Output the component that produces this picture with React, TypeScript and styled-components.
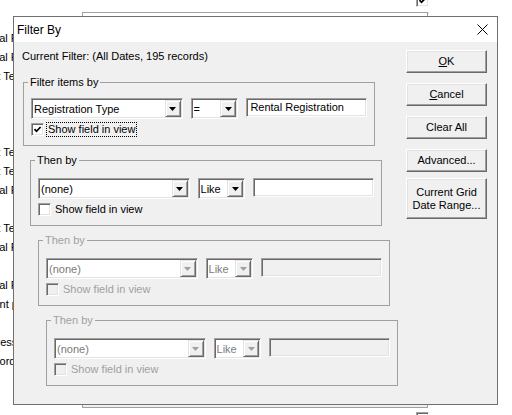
import * as React from "react";
import styled, { createGlobalStyle } from "styled-components";

const GlobalStyle = createGlobalStyle`
  html, body {
    margin: 0;
    padding: 0;
    background: #fff;
  }
  body {
    font-family: "Liberation Sans", Arial, sans-serif;
    font-size: 11px;
    color: #000;
  }
`;

const Desktop = styled.div`
  position: relative;
  width: 512px;
  height: 415px;
  overflow: hidden;
  background: #fff;
`;

// grid of the page underneath the dialogs
const PageGrid = styled.div`
  position: absolute;
  left: 0;
  top: -9px;
  display: grid;
  grid-template-columns: 13px 403px 13px;
  grid-auto-rows: 19px;
  align-items: center;
`;

const PageCell = styled.div`
  overflow: hidden;
  height: 19px;
`;

const PageText = styled.div<{ $indent: number }>`
  margin-left: ${(p) => p.$indent}px;
  white-space: nowrap;
  line-height: 19px;
`;

const BackWindow = styled.div`
  position: absolute;
  left: 82px;
  top: 12px;
  width: 346px;
  height: 396px;
  box-sizing: border-box;
  border: 1px solid #a0a0a0;
  background: #fff;
  display: flex;
  flex-direction: column;
  justify-content: flex-end;
`;

const BackStatus = styled.div`
  height: 3px;
  background: #f0f0f0;
`;

const Dialog = styled.div`
  position: absolute;
  left: 13px;
  top: 16px;
  width: 485px;
  height: 389px;
  box-sizing: border-box;
  border: 1px solid #707070;
  background: #f0f0f0;
  display: flex;
  flex-direction: column;
`;

const TitleBar = styled.div`
  height: 25px;
  flex: none;
  background: #fff;
  display: flex;
  align-items: center;
  justify-content: space-between;
  padding: 0 9px 0 3px;
  font-size: 12px;
`;

const CloseGlyph = styled.svg`
  width: 11px;
  height: 11px;
`;

const Body = styled.div`
  flex: 1;
  display: flex;
  gap: 8px;
  padding: 8px 0 0 8px;
`;

const FilterColumn = styled.div`
  width: 376px;
  display: flex;
  flex-direction: column;
`;

const CurrentFilter = styled.div`
  line-height: 13px;
  margin-bottom: 13px;
`;

const Group = styled.fieldset<{ $indent: number; $top: number }>`
  width: 352px;
  box-sizing: border-box;
  margin: 0 0 8px ${(p) => p.$indent}px;
  padding: ${(p) => p.$top}px 7px 8px 7px;
  border: 1px solid #a0a0a0;
  min-width: 0;
`;

const Legend = styled.legend<{ $disabled: boolean }>`
  padding: 0 2px;
  margin-left: -3px;
  line-height: 13px;
  color: ${(p) => (p.$disabled ? "#a0a0a0" : "#000")};
`;

const FieldRow = styled.div`
  display: flex;
  gap: 8px;
  align-items: flex-start;
`;

const Combo = styled.div<{ $width: number; $disabled: boolean }>`
  width: ${(p) => p.$width}px;
  height: 21px;
  box-sizing: border-box;
  border: 1px solid;
  border-color: #a0a0a0 #fff #fff #a0a0a0;
  box-shadow: inset 1px 1px #696969, inset -1px -1px #e3e3e3;
  background: #fff;
  padding: 2px 1px 2px 2px;
  display: flex;
  align-items: center;
  color: ${(p) => (p.$disabled ? "#7a7a7a" : "#000")};
`;

const ComboText = styled.span`
  flex: 1;
  white-space: nowrap;
  overflow: hidden;
`;

const DropButton = styled.span`
  width: 16px;
  height: 17px;
  flex: none;
  box-sizing: border-box;
  border: 1px solid;
  border-color: #e3e3e3 #696969 #696969 #e3e3e3;
  box-shadow: inset 1px 1px #fff, inset -1px -1px #a0a0a0;
  background: #f0f0f0;
  display: flex;
  align-items: center;
  justify-content: center;
`;

const TextBox = styled.div<{ $disabled: boolean }>`
  width: 121px;
  height: 19px;
  box-sizing: border-box;
  border: 1px solid;
  border-color: #a0a0a0 #fff #fff #a0a0a0;
  box-shadow: inset 1px 1px #696969, inset -1px -1px #e3e3e3;
  background: ${(p) => (p.$disabled ? "#f0f0f0" : "#fff")};
  padding: 0 3px;
  line-height: 17px;
  white-space: nowrap;
  overflow: hidden;
`;

const CheckRow = styled.div`
  display: flex;
  align-items: center;
  height: 15px;
  margin-top: 3px;
`;

const Box = styled.span<{ $disabled?: boolean }>`
  width: 13px;
  height: 13px;
  box-sizing: border-box;
  flex: none;
  border: 1px solid;
  border-color: #a0a0a0 #fff #fff #a0a0a0;
  box-shadow: inset 1px 1px #696969, inset -1px -1px #e3e3e3;
  background: ${(p) => (p.$disabled ? "#f0f0f0" : "#fff")};
  display: flex;
  align-items: center;
  justify-content: center;
`;

const CheckLabel = styled.span<{ $focused: boolean; $disabled: boolean }>`
  margin-left: 2px;
  padding: 0 1px;
  line-height: 13px;
  white-space: nowrap;
  border: 1px dotted ${(p) => (p.$focused ? "#000" : "transparent")};
  color: ${(p) => (p.$disabled ? "#a0a0a0" : "#000")};
`;

const ButtonColumn = styled.div`
  display: flex;
  flex-direction: column;
  gap: 10px;
`;

const Button = styled.button<{ $tall?: boolean }>`
  width: 81px;
  height: ${(p) => (p.$tall ? 41 : 23)}px;
  box-sizing: border-box;
  margin: ${(p) => (p.$tall ? "-4px 0 0" : "0")};
  padding: 0;
  font: inherit;
  line-height: 13px;
  color: #000;
  background: #f0f0f0;
  border: 1px solid;
  border-color: #fff #696969 #696969 #fff;
  box-shadow: inset -1px -1px #a0a0a0, inset 1px 1px #e3e3e3;
`;

function Arrow({ disabled }: { disabled: boolean }) {
  return (
    <svg width="7" height="4" viewBox="0 0 7 4">
      <polygon points="0,0 7,0 3.5,4" fill={disabled ? "#a0a0a0" : "#000"} />
    </svg>
  );
}

function Checkbox({ checked, disabled }: { checked: boolean; disabled?: boolean }) {
  return (
    <Box $disabled={disabled}>
      {checked && (
        <svg width="9" height="9" viewBox="0 0 9 9">
          <polyline
            points="1.5,4.2 3.5,6.3 7.6,2"
            fill="none"
            stroke="#000"
            strokeWidth="1.8"
          />
        </svg>
      )}
    </Box>
  );
}

interface FilterGroup {
  title: string;
  field: string;
  op: string;
  value: string;
  checked: boolean;
  focused: boolean;
  disabled: boolean;
  indent: number;
  top: number;
}

const groups: FilterGroup[] = [
  {
    title: "Filter items by",
    field: "Registration Type",
    op: "=",
    value: "Rental Registration",
    checked: true,
    focused: true,
    disabled: false,
    indent: 1,
    top: 9,
  },
  { title: "Then by", field: "(none)", op: "Like", value: "", checked: false, focused: false, disabled: false, indent: 8, top: 11 },
  { title: "Then by", field: "(none)", op: "Like", value: "", checked: false, focused: false, disabled: true, indent: 16, top: 11 },
  { title: "Then by", field: "(none)", op: "Like", value: "", checked: false, focused: false, disabled: true, indent: 24, top: 11 },
];

const pageRows: { [row: number]: [string, number] } = {
  2: ["Rental Registration", -24],
  3: ["Rental Registration", -24],
  4: ["Short Term Rental", -26],
  8: ["Short Term Rental", -26],
  9: ["Short Term Rental", -26],
  10: ["Rental Registration", -24],
  12: ["Short Term Rental", -26],
  13: ["Rental Registration", -24],
  15: ["Rental Registration", -24],
  16: ["Agent permit", -20],
  18: ["Address", -23],
  19: ["Record", -20],
};

export default function App() {
  const rows = Array.from({ length: 23 }, (_, i) => i);
  return (
    <>
      <GlobalStyle />
      <Desktop>
        <PageGrid>
          {rows.map((i) => (
            <React.Fragment key={i}>
              <PageCell>
                {pageRows[i] && <PageText $indent={pageRows[i][1]}>{pageRows[i][0]}</PageText>}
              </PageCell>
              <div />
              <Checkbox checked={i === 0} />
            </React.Fragment>
          ))}
        </PageGrid>

        <BackWindow>
          <BackStatus />
        </BackWindow>

        <Dialog>
          <TitleBar>
            <span>Filter By</span>
            <CloseGlyph viewBox="0 0 11 11">
              <path d="M0.5 0.5 L10.5 10.5 M10.5 0.5 L0.5 10.5" stroke="#000" strokeWidth="1" />
            </CloseGlyph>
          </TitleBar>
          <Body>
            <FilterColumn>
              <CurrentFilter>Current Filter: (All Dates, 195 records)</CurrentFilter>
              {groups.map((g, i) => (
                <Group key={i} $indent={g.indent} $top={g.top}>
                  <Legend $disabled={g.disabled}>{g.title}</Legend>
                  <FieldRow>
                    <Combo $width={152} $disabled={g.disabled}>
                      <ComboText>{g.field}</ComboText>
                      <DropButton>
                        <Arrow disabled={g.disabled} />
                      </DropButton>
                    </Combo>
                    <Combo $width={48} $disabled={g.disabled}>
                      <ComboText>{g.op}</ComboText>
                      <DropButton>
                        <Arrow disabled={g.disabled} />
                      </DropButton>
                    </Combo>
                    <TextBox $disabled={g.disabled}>{g.value}</TextBox>
                  </FieldRow>
                  <CheckRow>
                    <Checkbox checked={g.checked} disabled={g.disabled} />
                    <CheckLabel $focused={g.focused} $disabled={g.disabled}>
                      Show field in view
                    </CheckLabel>
                  </CheckRow>
                </Group>
              ))}
            </FilterColumn>
            <ButtonColumn>
              <Button>
                <u>O</u>K
              </Button>
              <Button>
                <u>C</u>ancel
              </Button>
              <Button>Clear All</Button>
              <Button>Advanced...</Button>
              <Button $tall>
                Current Grid
                <br />
                Date Range...
              </Button>
            </ButtonColumn>
          </Body>
        </Dialog>
      </Desktop>
    </>
  );
}
